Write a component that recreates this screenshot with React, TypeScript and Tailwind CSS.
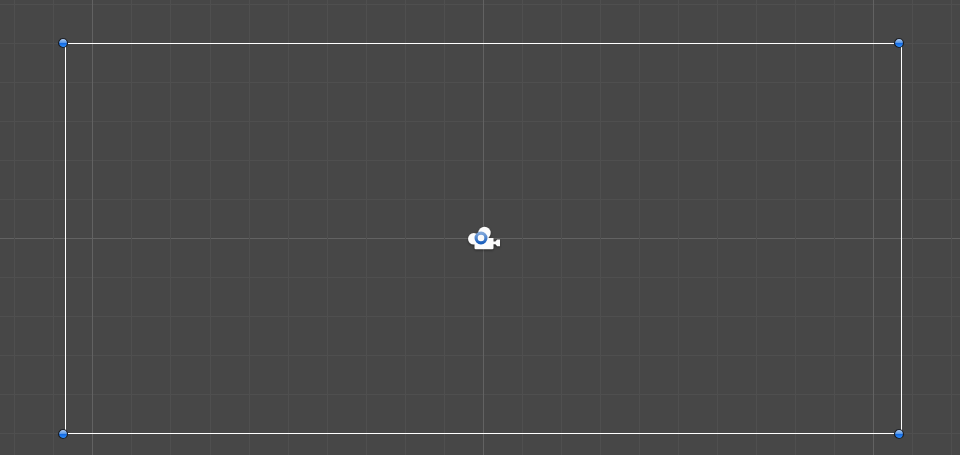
const columns = [14, 53, 92, 131, 170, 210, 249, 288, 327, 366, 405, 444, 483, 522, 561, 600, 639, 678, 717, 756, 795, 834, 873, 912, 951];
const rows = [4, 43, 82, 121, 160, 199, 238, 277, 316, 355, 394, 433];
const majorColumns = [92, 483, 873];
const lineColor = (major: boolean) => (major ? "#626262" : "#4f4f4f");

function Grid() {
  return (
    <svg className="absolute inset-0" width="960" height="455" shapeRendering="crispEdges" aria-hidden="true">
      {rows.map((y) => <rect key={y} x="0" y={y} width="960" height="1" fill={lineColor(y === 238)} />)}
      {columns.map((x) => <rect key={x} x={x} y="0" width="1" height="455" fill={lineColor(majorColumns.includes(x))} />)}
    </svg>
  );
}

function Handle({ className }: { className: string }) {
  return (
    <svg className={`absolute size-[10px] overflow-visible ${className}`} viewBox="0 0 10 10" aria-hidden="true">
      <defs>
        <linearGradient id="handle-fill" x1="0" y1="0" x2="0" y2="1">
          <stop offset="0.1" stopColor="#a6c6f0" />
          <stop offset="0.45" stopColor="#5a9aea" />
          <stop offset="0.52" stopColor="#1268e0" />
          <stop offset="0.95" stopColor="#3090ff" />
        </linearGradient>
      </defs>
      <circle cx="5" cy="5" r="4.5" fill="url(#handle-fill)" stroke="#1c1e22" strokeWidth="1.2" />
    </svg>
  );
}

function CameraGizmo() {
  return (
    <svg className="absolute top-[224px] left-[465px] drop-shadow-[0_1px_1px_rgba(0,0,0,0.45)]" width="38" height="29" viewBox="0 0 38 29" aria-label="Camera">
      <defs>
        <linearGradient id="ring" x1="0" y1="0" x2="0" y2="1">
          <stop offset="0" stopColor="#7fa6da" />
          <stop offset="1" stopColor="#1b60bd" />
        </linearGradient>
      </defs>
      <g fill="#fcfcfc">
        <circle cx="19.5" cy="9" r="6.2" />
        <circle cx="8.8" cy="14.8" r="5.8" />
        <path d="M9.5 14H28.5V17.4H30.4L32.2 15.4H35V22.3H32.2L30.4 20.3H28.5V24Q28.5 25.3 27.2 25.3H10.8Q9.5 25.3 9.5 24Z" />
      </g>
      <circle cx="16" cy="14" r="4.9" fill="#fafafa" stroke="url(#ring)" strokeWidth="3.2" />
    </svg>
  );
}

export default function App() {
  return (
    <main className="relative h-[455px] w-[960px] overflow-hidden bg-[#474747]">
      <Grid />
      <div className="absolute top-[43px] left-[65px] h-[391px] w-[837px] border border-white" />
      <Handle className="top-[38px] left-[58px]" />
      <Handle className="top-[38px] left-[894px]" />
      <Handle className="top-[429px] left-[58px]" />
      <Handle className="top-[429px] left-[894px]" />
      <CameraGizmo />
    </main>
  );
}
